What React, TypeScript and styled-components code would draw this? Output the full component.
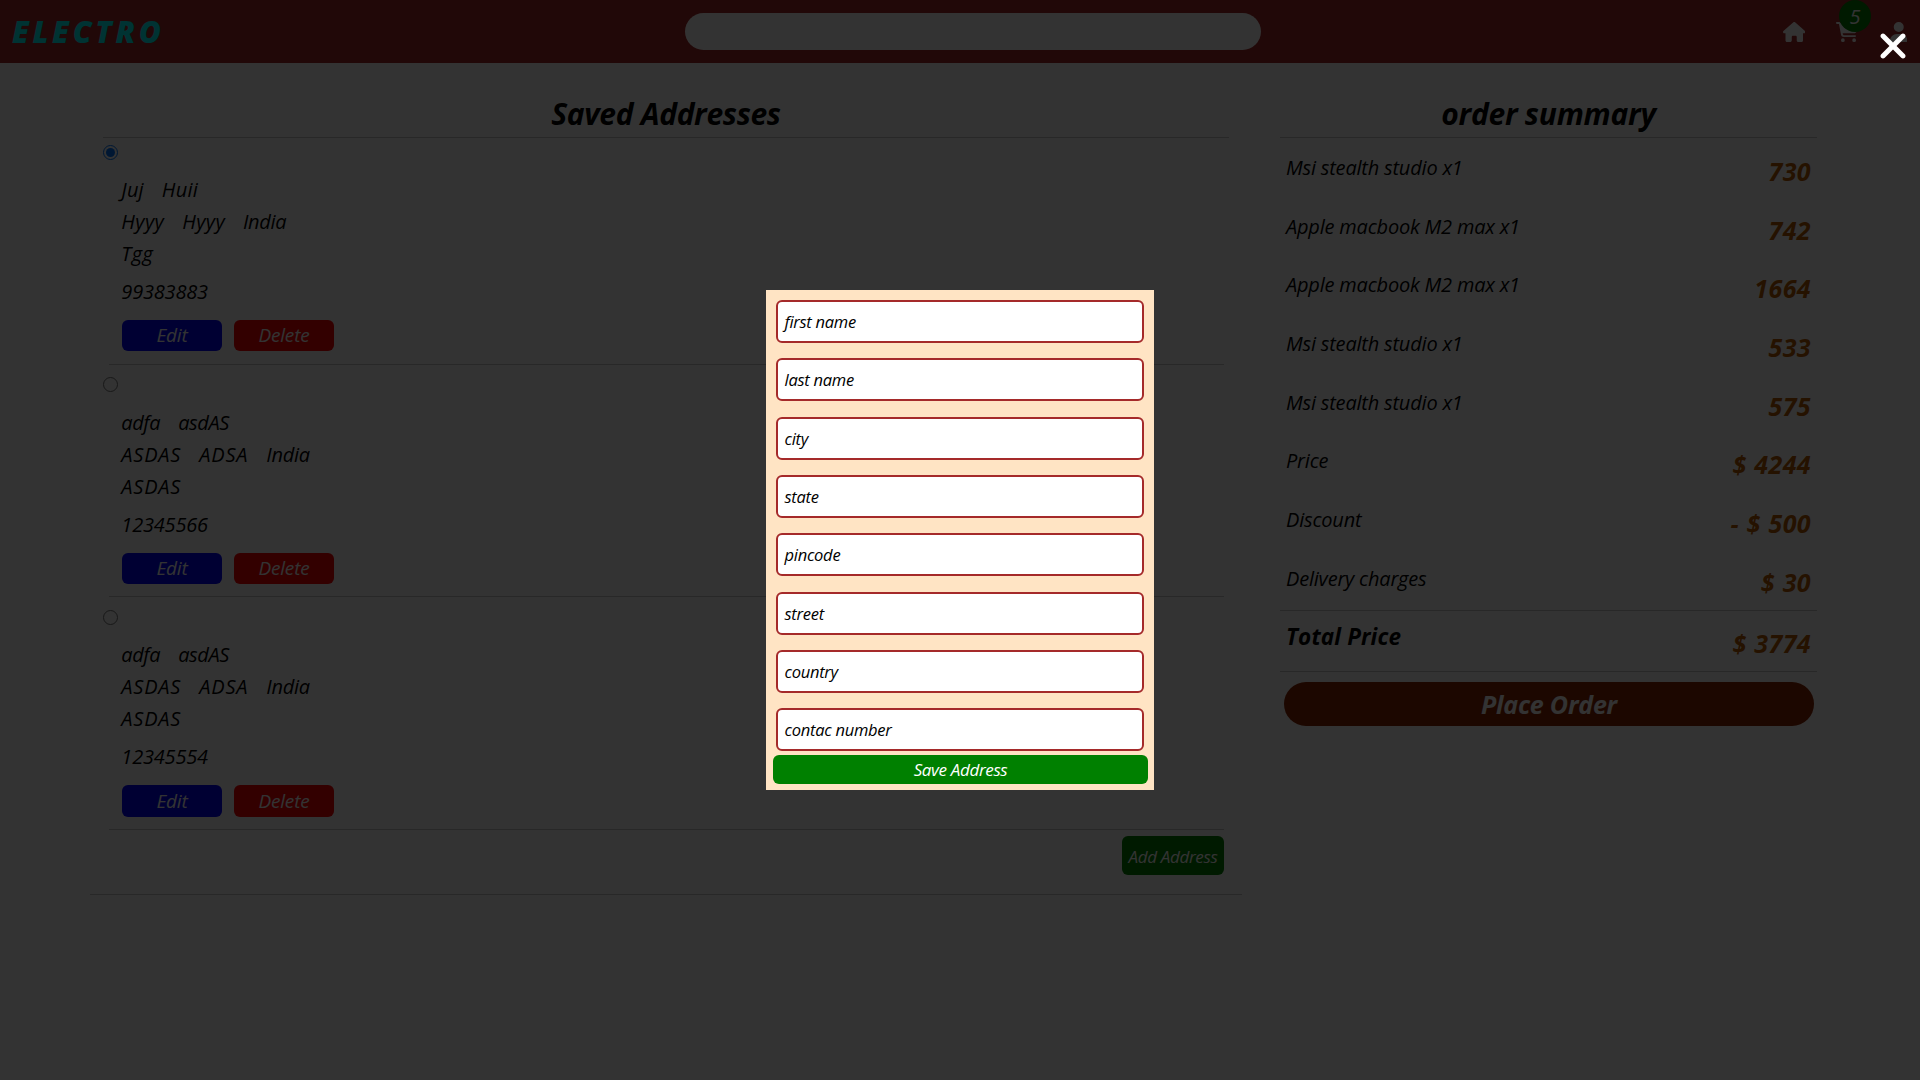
import React from "react";
import styled, { createGlobalStyle } from "styled-components";
import { FaHouse, FaCartShopping, FaUser, FaXmark } from "react-icons/fa6";

const GlobalStyle = createGlobalStyle`
  *, *::before, *::after { box-sizing: border-box; }
  html, body { margin: 0; padding: 0; height: 100%; overflow: hidden; background: #fff; }
  body {
    font-family: "Open Sans", "Noto Sans", sans-serif;
    font-style: italic;
    font-size: 20px;
    color: #000;
  }
  h1, h2, p { margin: 0; }
  button { font-family: inherit; font-style: inherit; border: 0; padding: 0; color: #fff; }
`;

const Header = styled.header`
  display: grid;
  grid-template-columns: 685px 576px 1fr;
  align-items: center;
  height: 63px;
  background: brown;
`;

const Logo = styled.h1`
  padding: 1px 0 0 12px;
  font-size: 30px;
  line-height: 40px;
  font-weight: 800;
  letter-spacing: 3.7px;
  color: aqua;
`;

const Search = styled.input`
  width: 100%;
  height: 37px;
  border: 0;
  border-radius: 19px;
  background: #fff;
  outline: none;
`;

const Nav = styled.nav`
  display: flex;
  justify-content: flex-end;
  align-items: center;
  gap: 31px;
  padding: 1px 13px 0 0;
  color: #fff;
  svg { display: block; }
`;

const CartLink = styled.div`
  position: relative;
`;

const Badge = styled.span`
  position: absolute;
  left: 3px;
  top: -22.5px;
  width: 32px;
  height: 32px;
  border-radius: 50%;
  background: green;
  line-height: 33px;
  text-align: center;
`;

const Main = styled.main`
  display: flex;
  align-items: flex-start;
  gap: 38px;
  padding: 29px 0 0 90px;
`;

const AddressPanel = styled.section`
  width: 1152px;
  padding: 0 13px 19px;
  border-bottom: 1px solid #c8c8c8;
`;

const SummaryPanel = styled.section`
  width: 537px;
`;

const Title = styled.h2<{ $spacing: number }>`
  height: 46px;
  border-bottom: 1px solid #c8c8c8;
  font-size: 30px;
  line-height: 43px;
  font-weight: 700;
  text-align: center;
  letter-spacing: ${(p) => p.$spacing}px;
`;

const CardList = styled.div`
  display: flex;
  flex-direction: column;
  gap: 5.85px;
`;

const Card = styled.article`
  display: flex;
  flex-direction: column;
  height: 226.8px;
  padding-top: 6.5px;
`;

const Radio = styled.input`
  width: 15px;
  height: 15px;
  margin: 0;
`;

const CardBody = styled.div`
  flex: 1;
  padding: 14.4px 0 0 19px;
`;

const Line = styled.div<{ $top?: number; $spacing: number }>`
  display: flex;
  gap: 18px;
  margin: ${(p) => p.$top ?? 0}px 0 0 -0.7px;
  line-height: 32px;
  height: 32px;
  letter-spacing: ${(p) => p.$spacing}px;
`;

const Country = styled.span`
  letter-spacing: -0.3px;
`;

const Actions = styled.div`
  display: flex;
  gap: 12px;
  margin-top: 12.3px;
`;

const ActionButton = styled.button<{ $color: string }>`
  width: 100px;
  height: 31.3px;
  border-radius: 6px;
  background: ${(p) => p.$color};
  font-size: 19px;
  line-height: 31px;
  letter-spacing: -0.2px;
`;

const Divider = styled.div`
  height: 1px;
  margin: 0 5px 0 6px;
  background: #c8c8c8;
`;

const AddRow = styled.div`
  display: flex;
  justify-content: flex-end;
  padding: 6px 5px 0 0;
`;

const AddButton = styled.button`
  width: 102px;
  height: 39px;
  padding-top: 2px;
  border-radius: 6px;
  background: green;
  font-size: 17px;
  letter-spacing: -0.32px;
  white-space: nowrap;
`;

const Rows = styled.div`
  height: 473px;
  border-bottom: 1px solid #c8c8c8;
`;

const Row = styled.div`
  display: flex;
  justify-content: space-between;
  height: 58.7px;
  padding: 14px 6px 0;
`;

const TotalRow = styled(Row)`
  height: 61px;
  padding-top: 10.3px;
  border-bottom: 1px solid #c8c8c8;
`;

const ItemName = styled.span`
  line-height: 32px;
  letter-spacing: -0.2px;
`;

const TotalLabel = styled.span`
  font-size: 22.5px;
  font-weight: 700;
  line-height: 32px;
  letter-spacing: 0.15px;
`;

const Amount = styled.span<{ $top?: number }>`
  margin-top: ${(p) => p.$top ?? -0.2}px;
  font-size: 25px;
  line-height: 38px;
  font-weight: 700;
  letter-spacing: 0.4px;
  word-spacing: 0.8px;
  white-space: pre;
  color: #b85c00;
`;

const PlaceOrder = styled.button`
  display: block;
  width: 530px;
  height: 44px;
  margin: 10px 0 0 4px;
  border-radius: 22px;
  background: #8b2500;
  font-size: 25px;
  font-weight: 700;
  line-height: 45px;
  letter-spacing: -0.2px;
`;

const Overlay = styled.div`
  position: fixed;
  inset: 0;
  display: flex;
  align-items: center;
  justify-content: center;
  background: rgba(0, 0, 0, 0.8);
`;

const CloseButton = styled.button`
  position: absolute;
  top: 26px;
  right: 7px;
  width: 40px;
  height: 40px;
  background: transparent;
  svg { display: block; }
`;

const Dialog = styled.form`
  width: 388px;
  height: 500px;
  padding: 10px 10px 0;
  background: bisque;
`;

const Fields = styled.div`
  display: flex;
  flex-direction: column;
  gap: 15.32px;
`;

const Field = styled.label`
  height: 43px;
  padding-left: 6.5px;
  border: 2px solid brown;
  border-radius: 6px;
  background: #fff;
  font-size: 16.5px;
  line-height: 40px;
  letter-spacing: -0.27px;
`;

const SaveButton = styled.button`
  display: block;
  width: 375px;
  height: 29px;
  margin: 4px 0 0 -3px;
  border-radius: 6px;
  background: green;
  font-size: 17px;
  line-height: 29px;
  letter-spacing: -0.35px;
`;

const addresses = [
  { name: ["Juj", "Huii"], place: ["Hyyy", "Hyyy"], country: "India", street: "Tgg", phone: "99383883", spacing: 0.4, nameSpacing: 0.2 },
  { name: ["adfa", "asdAS"], place: ["ASDAS", "ADSA"], country: "India", street: "ASDAS", phone: "12345566", spacing: 0.8, nameSpacing: -0.4 },
  { name: ["adfa", "asdAS"], place: ["ASDAS", "ADSA"], country: "India", street: "ASDAS", phone: "12345554", spacing: 0.8, nameSpacing: -0.4 },
];

const summary = [
  ["Msi stealth studio x1", "730"],
  ["Apple macbook M2 max x1", "742"],
  ["Apple macbook M2 max x1", "1664"],
  ["Msi stealth studio x1", "533"],
  ["Msi stealth studio x1", "575"],
  ["Price", "$ 4244"],
  ["Discount", "- $ 500"],
  ["Delivery charges", "$ 30"],
];

const fields = ["first name", "last name", "city", "state", "pincode", "street", "country", "contac number"];

export default function App() {
  return (
    <>
      <GlobalStyle />
      <Header>
        <Logo>ELECTRO</Logo>
        <Search />
        <Nav>
          <FaHouse size={20} style={{ width: 22.5 }} />
          <CartLink>
            <FaCartShopping size={20} style={{ width: 22.5 }} />
            <Badge>5</Badge>
          </CartLink>
          <FaUser size={20} style={{ width: 17.5 }} />
        </Nav>
      </Header>
      <Main>
        <AddressPanel>
          <Title $spacing={-0.34}>Saved Addresses</Title>
          <CardList>
            {addresses.map((a, i) => (
              <Card key={i}>
                <Radio type="radio" name="address" defaultChecked={i === 0} />
                <CardBody>
                  <Line $spacing={a.nameSpacing}>{a.name.map((t, k) => <span key={k}>{t}</span>)}</Line>
                  <Line $spacing={a.spacing}>
                    {a.place.map((t, k) => <span key={k}>{t}</span>)}
                    <Country>{a.country}</Country>
                  </Line>
                  <Line $spacing={a.spacing}>{a.street}</Line>
                  <Line $top={6} $spacing={-0.2}>{a.phone}</Line>
                  <Actions>
                    <ActionButton $color="blue">Edit</ActionButton>
                    <ActionButton $color="red">Delete</ActionButton>
                  </Actions>
                </CardBody>
                <Divider />
              </Card>
            ))}
          </CardList>
          <AddRow>
            <AddButton>Add Address</AddButton>
          </AddRow>
        </AddressPanel>
        <SummaryPanel>
          <Title $spacing={-0.25}>order summary</Title>
          <Rows>
            {summary.map(([label, value], i) => (
              <Row key={i}>
                <ItemName>{label}</ItemName>
                <Amount>{value}</Amount>
              </Row>
            ))}
          </Rows>
          <TotalRow>
            <TotalLabel>Total Price</TotalLabel>
            <Amount $top={2.7}>$ 3774</Amount>
          </TotalRow>
          <PlaceOrder>Place Order</PlaceOrder>
        </SummaryPanel>
      </Main>
      <Overlay>
        <CloseButton type="button" aria-label="Close">
          <FaXmark size={40} />
        </CloseButton>
        <Dialog>
          <Fields>
            {fields.map((f) => <Field key={f}>{f}</Field>)}
          </Fields>
          <SaveButton type="button">Save Address</SaveButton>
        </Dialog>
      </Overlay>
    </>
  );
}
